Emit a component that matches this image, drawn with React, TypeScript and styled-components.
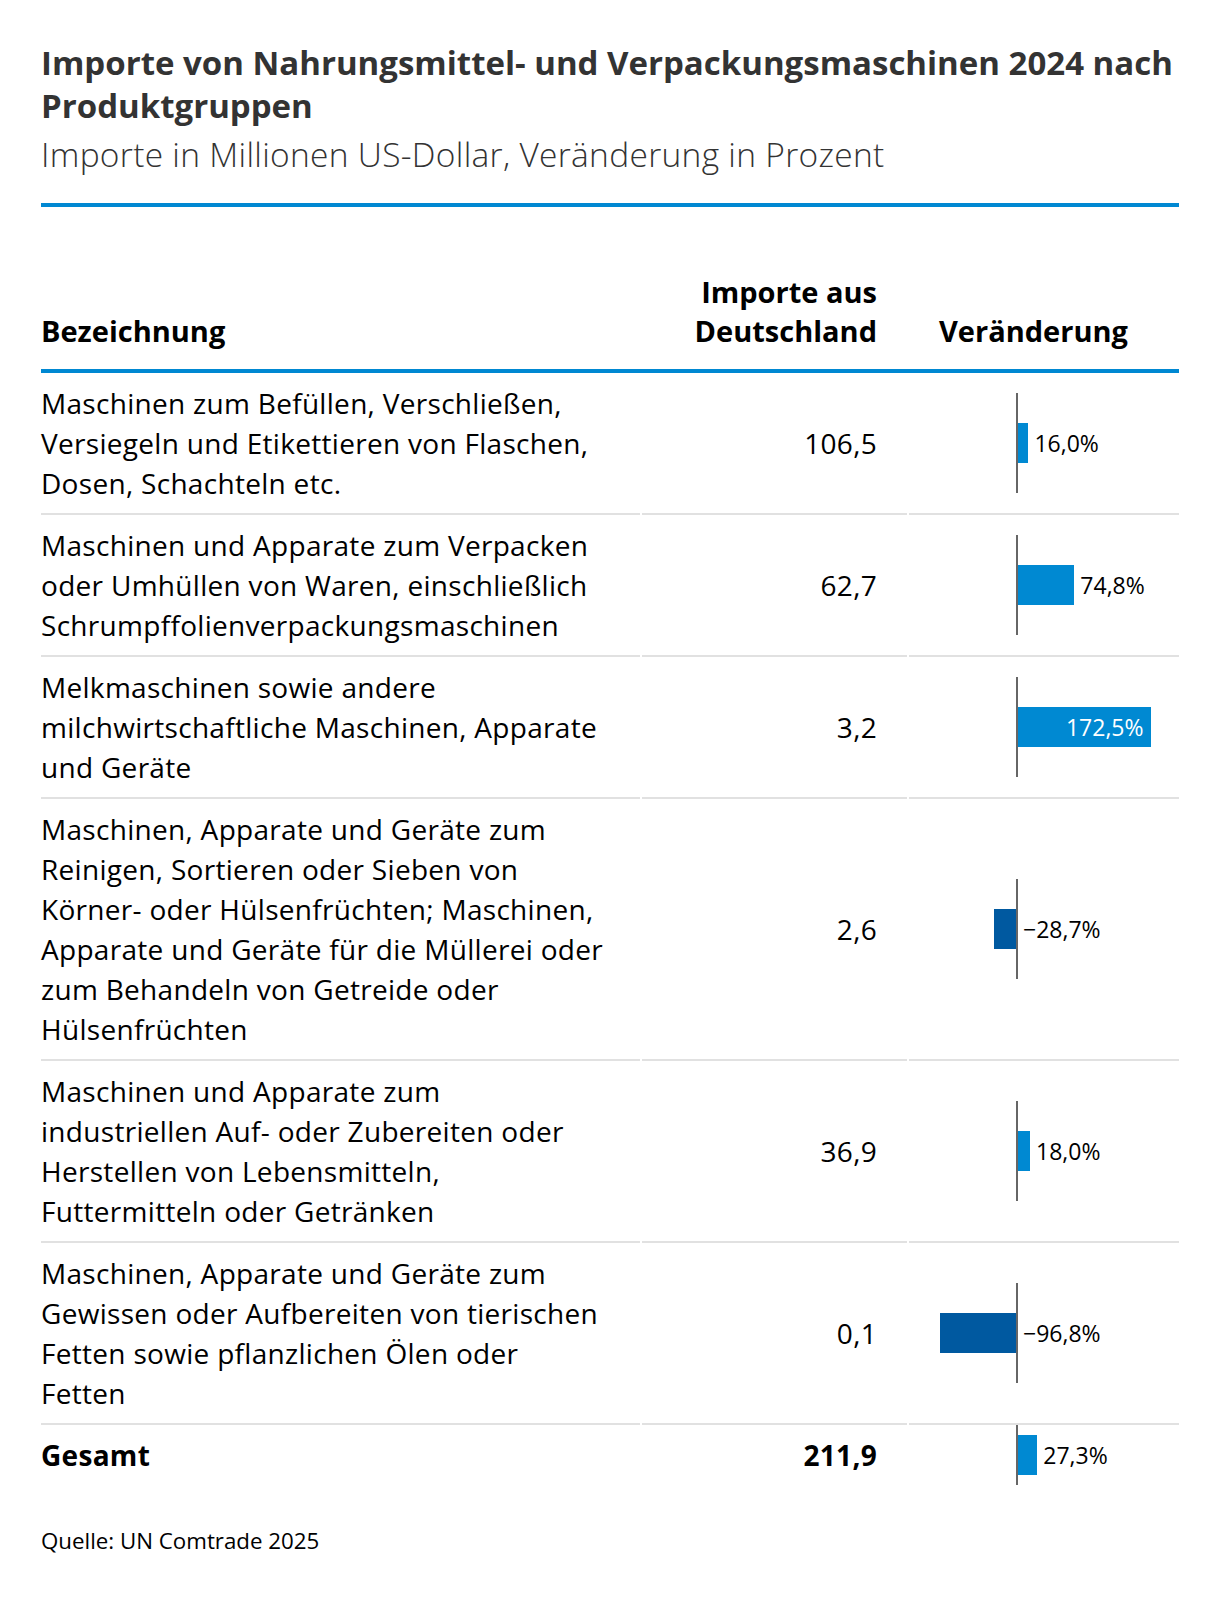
import React from "react";
import styled, { createGlobalStyle } from "styled-components";

const GlobalStyle = createGlobalStyle`
  html, body { margin: 0; padding: 0; background: #ffffff; }
  body {
    font-family: "Open Sans", "Noto Sans", "Liberation Sans", sans-serif;
    -webkit-font-smoothing: antialiased;
  }
`;

const ZERO = 107;
const SCALE = 0.78;

type Item = {
  lines: string[];
  value: string;
  change: number;
  label: string;
  inside?: boolean;
};

const items: Item[] = [
  {
    lines: [
      "Maschinen zum Befüllen, Verschließen,",
      "Versiegeln und Etikettieren von Flaschen,",
      "Dosen, Schachteln etc.",
    ],
    value: "106,5",
    change: 16.0,
    label: "16,0%",
  },
  {
    lines: [
      "Maschinen und Apparate zum Verpacken",
      "oder Umhüllen von Waren, einschließlich",
      "Schrumpffolienverpackungsmaschinen",
    ],
    value: "62,7",
    change: 74.8,
    label: "74,8%",
  },
  {
    lines: [
      "Melkmaschinen sowie andere",
      "milchwirtschaftliche Maschinen, Apparate",
      "und Geräte",
    ],
    value: "3,2",
    change: 172.5,
    label: "172,5%",
    inside: true,
  },
  {
    lines: [
      "Maschinen, Apparate und Geräte zum",
      "Reinigen, Sortieren oder Sieben von",
      "Körner- oder Hülsenfrüchten; Maschinen,",
      "Apparate und Geräte für die Müllerei oder",
      "zum Behandeln von Getreide oder",
      "Hülsenfrüchten",
    ],
    value: "2,6",
    change: -28.7,
    label: "\u221228,7%",
  },
  {
    lines: [
      "Maschinen und Apparate zum",
      "industriellen Auf- oder Zubereiten oder",
      "Herstellen von Lebensmitteln,",
      "Futtermitteln oder Getränken",
    ],
    value: "36,9",
    change: 18.0,
    label: "18,0%",
  },
  {
    lines: [
      "Maschinen, Apparate und Geräte zum",
      "Gewissen oder Aufbereiten von tierischen",
      "Fetten sowie pflanzlichen Ölen oder",
      "Fetten",
    ],
    value: "0,1",
    change: -96.8,
    label: "\u221296,8%",
  },
];

const Page = styled.div`
  padding: 41px 41px 44px;
  color: #000;
`;

const Title = styled.h1`
  margin: 0;
  font-size: 33px;
  line-height: 43px;
  font-weight: 700;
  color: #333333;
  white-space: nowrap;
`;

const Subtitle = styled.p`
  margin: 7px 0 0;
  font-size: 33.5px;
  line-height: 40px;
  letter-spacing: 0.3px;
  font-weight: 300;
  color: #333333;
`;

const Rule = styled.div`
  height: 4px;
  margin-top: 29px;
  background: #0088d2;
`;

const Table = styled.div`
  margin-top: 65px;
  display: flex;
  flex-direction: column;
`;

const Row = styled.div<{ $head?: boolean }>`
  display: grid;
  grid-template-columns: 599px 265px 270px;
  column-gap: 2px;
  ${(p) => (p.$head ? "border-bottom: 4px solid #0088d2;" : "")}
`;

const Cell = styled.div<{ $last?: boolean; $bold?: boolean }>`
  padding: 10px 0;
  font-size: 28px;
  line-height: 40px;
  letter-spacing: 0.3px;
  font-weight: ${(p) => (p.$bold ? 700 : 400)};
  border-bottom: ${(p) => (p.$last ? "none" : "2px solid #e1e1e1")};
`;

const NameCell = styled(Cell)``;

const ValueCell = styled(Cell)`
  display: flex;
  align-items: center;
  justify-content: flex-end;
  padding-right: 30px;
`;

const ChartCell = styled(Cell)`
  padding: 0;
  display: flex;
  align-items: center;
`;

const HeadCell = styled.div<{ $align?: string; $pad?: string }>`
  display: flex;
  flex-direction: column;
  justify-content: flex-end;
  align-items: ${(p) => p.$align || "flex-start"};
  padding: ${(p) => p.$pad || "0"};
  padding-bottom: 19px;
  font-size: 29px;
  line-height: 39px;
  font-weight: 700;
  text-align: ${(p) => (p.$align === "flex-end" ? "right" : "left")};
`;

const Chart = styled.div<{ $h: number }>`
  position: relative;
  width: 100%;
  height: ${(p) => p.$h}px;
`;

const Axis = styled.div`
  position: absolute;
  left: ${ZERO}px;
  top: 0;
  bottom: 0;
  width: 2px;
  background: #666666;
  z-index: 2;
`;

const Bar = styled.div<{ $neg: boolean }>`
  position: absolute;
  top: 50%;
  height: 40px;
  margin-top: -20px;
  background: ${(p) => (p.$neg ? "#0059a0" : "#0089d2")};
  display: flex;
  align-items: center;
  justify-content: flex-end;
  box-sizing: border-box;
  padding-right: 7px;
`;

const BarLabel = styled.span<{ $inside?: boolean }>`
  position: ${(p) => (p.$inside ? "static" : "absolute")};
  top: 50%;
  transform: ${(p) => (p.$inside ? "none" : "translateY(-50%)")};
  font-size: 23px;
  line-height: 28px;
  letter-spacing: 0;
  font-weight: 400;
  color: ${(p) => (p.$inside ? "#ffffff" : "#000000")};
  white-space: nowrap;
`;

const Source = styled.p`
  margin: 41px 0 0;
  font-size: 22.3px;
  line-height: 30px;
  color: #000;
`;

function ChangeChart({ change, label, inside, h }: { change: number; label: string; inside?: boolean; h: number }) {
  const w = Math.abs(change) * SCALE;
  const neg = change < 0;
  const left = neg ? ZERO - w : ZERO;
  const labelLeft = neg ? ZERO + 7 : ZERO + w + 6;
  return (
    <Chart $h={h}>
      <Bar $neg={neg} style={{ left, width: w }}>
        {inside && <BarLabel $inside>{label}</BarLabel>}
      </Bar>
      <Axis />
      {!inside && <BarLabel style={{ left: labelLeft }}>{label}</BarLabel>}
    </Chart>
  );
}

export default function App() {
  return (
    <>
      <GlobalStyle />
      <Page>
        <Title>
          Importe von Nahrungsmittel- und Verpackungsmaschinen 2024 nach
          <br />
          Produktgruppen
        </Title>
        <Subtitle>Importe in Millionen US-Dollar, Veränderung in Prozent</Subtitle>
        <Rule />
        <Table>
          <Row $head>
            <HeadCell>Bezeichnung</HeadCell>
            <HeadCell $align="flex-end" $pad="0 30px 0 0">
              <span>Importe aus</span>
              <span>Deutschland</span>
            </HeadCell>
            <HeadCell $pad="0 0 0 30px">Veränderung</HeadCell>
          </Row>
          {items.map((it, i) => (
            <Row key={i}>
              <NameCell>
                {it.lines.map((l, j) => (
                  <React.Fragment key={j}>
                    {l}
                    {j < it.lines.length - 1 && <br />}
                  </React.Fragment>
                ))}
              </NameCell>
              <ValueCell>{it.value}</ValueCell>
              <ChartCell>
                <ChangeChart change={it.change} label={it.label} inside={it.inside} h={100} />
              </ChartCell>
            </Row>
          ))}
          <Row>
            <NameCell $last $bold>Gesamt</NameCell>
            <ValueCell $last $bold>211,9</ValueCell>
            <ChartCell $last>
              <ChangeChart change={27.3} label="27,3%" h={60} />
            </ChartCell>
          </Row>
        </Table>
        <Source>Quelle: UN Comtrade 2025</Source>
      </Page>
    </>
  );
}
